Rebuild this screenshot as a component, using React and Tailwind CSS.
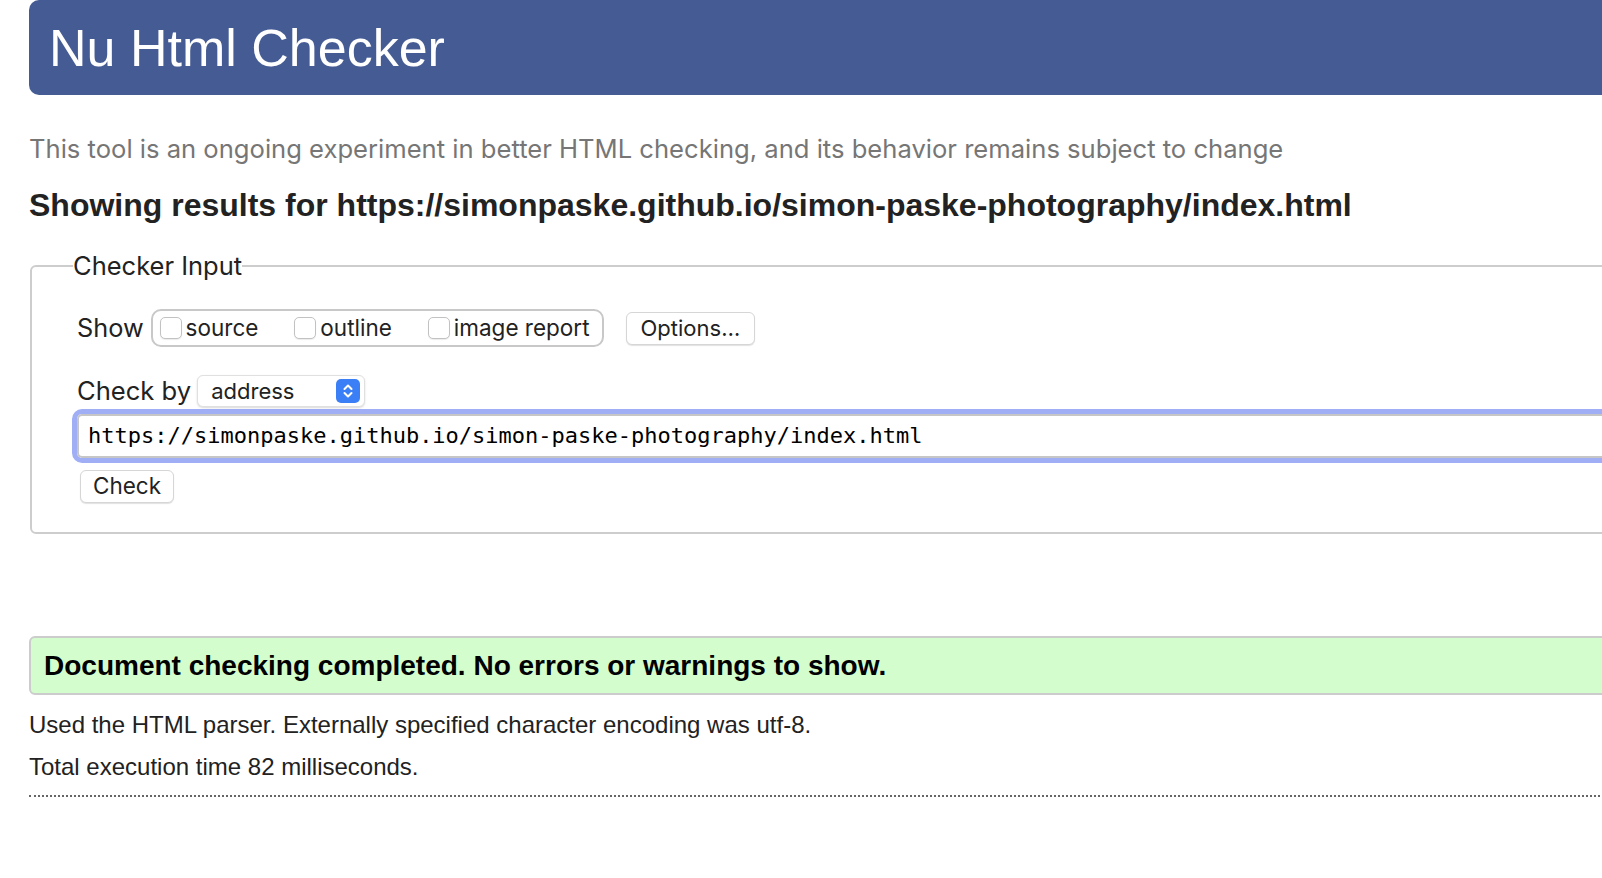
const URL_CHECKED = 'https://simonpaske.github.io/simon-paske-photography/index.html'

const SHOW_OPTIONS = ['source', 'outline', 'image report']

function Checkbox() {
  return (
    <span className="inline-block w-[22px] h-[22px] rounded-[5px] border border-[#c2c2c2] bg-white shadow-[0_1px_1px_rgba(0,0,0,0.08)]" />
  )
}

function SelectArrows() {
  return (
    <span className="flex items-center justify-center w-[24px] h-[24px] rounded-[5px] bg-[#3b7ff6]">
      <svg width="12" height="18" viewBox="0 0 12 18" fill="none" stroke="white" strokeWidth="2" strokeLinecap="round" strokeLinejoin="round">
        <path d="M2.5 7 L6 3.5 L9.5 7" />
        <path d="M2.5 11 L6 14.5 L9.5 11" />
      </svg>
    </span>
  )
}

export default function App() {
  return (
    <div className="w-full min-h-[878px] overflow-hidden bg-white">
      <div className="w-[1720px] pl-[29px]">
        {/* Bandeau titre */}
        <div className="h-[95px] flex items-center pl-[20px] rounded-[10px] bg-[#455b93]">
          <h1 className="font-['Liberation_Sans',Arial,sans-serif] text-[52px] leading-none text-white">Nu Html Checker</h1>
        </div>

        <p className="mt-[42px] font-['Inter',sans-serif] text-[25.6px] leading-[24px] text-[#767676]">
          This tool is an ongoing experiment in better HTML checking, and its behavior remains subject to change
        </p>

        <h2 className="mt-[28px] font-['Liberation_Sans',Arial,sans-serif] font-bold text-[32px] leading-[32px] text-[#222]">
          Showing results for {URL_CHECKED}
        </h2>

        {/* Formulaire */}
        <fieldset className="mt-[33px] ml-[1px] border-2 border-[#cdcdcd] rounded-[6px] font-['Inter',sans-serif] text-[#222]">
          <legend className="ml-[41px] text-[25.5px] leading-[24px]">Checker Input</legend>

          <div className="pt-[31px] pl-[45px] pb-[29px]">
            <div className="flex items-center">
              <span className="text-[25.3px] leading-none">Show</span>
              <div className="ml-[7px] h-[38px] flex items-center pl-[7px] pr-[12px] border-2 border-[#c8c8c8] rounded-[10px]">
                {SHOW_OPTIONS.map((o, i) => (
                  <label key={o} className={`flex items-center ${i > 0 ? 'ml-[36px]' : ''}`}>
                    <Checkbox />
                    <span className="ml-[4px] text-[22.5px] leading-none">{o}</span>
                  </label>
                ))}
              </div>
              <button className="ml-[22px] h-[33px] px-[14px] rounded-[6px] border border-[#d6d6d6] bg-white text-[22px] leading-none shadow-[0_1px_1px_rgba(0,0,0,0.12)]">
                Options…
              </button>
            </div>

            <div className="mt-[28px] flex items-center">
              <span className="text-[25.6px] leading-none">Check by</span>
              <div className="ml-[6px] w-[168px] h-[32px] flex items-center justify-between pl-[13px] pr-[4px] rounded-[6px] border border-[#e0e0e0] bg-white shadow-[0_1px_2px_rgba(0,0,0,0.15)]">
                <span className="text-[22px] leading-none">address</span>
                <SelectArrows />
              </div>
            </div>

            <div className="-ml-[5px] mt-[2px] border-[5px] border-[#a0aef5] rounded-[10px]">
              <div className="h-[44px] flex items-center pl-[9px] border-2 border-[#c6c6c6] rounded-[5px] bg-white">
                <span className="font-['DejaVu_Sans_Mono',monospace] text-[22px] leading-none text-black">{URL_CHECKED}</span>
              </div>
            </div>

            <button className="mt-[7px] ml-[3px] h-[33px] px-[12px] rounded-[6px] border border-[#d6d6d6] bg-white text-[22.5px] leading-none shadow-[0_1px_1px_rgba(0,0,0,0.12)]">
              Check
            </button>
          </div>
        </fieldset>

        {/* Résultat */}
        <div className="mt-[102px] h-[59px] flex items-center pl-[13px] border-2 border-[#cccccc] rounded-[6px] bg-[#d4fdcd]">
          <p className="font-['Liberation_Sans',Arial,sans-serif] font-bold text-[28px] leading-none text-black">
            Document checking completed. No errors or warnings to show.
          </p>
        </div>

        <div className="font-['Liberation_Sans',Arial,sans-serif] text-[24px] leading-[24px] text-[#222]">
          <p className="mt-[18px]">Used the HTML parser. Externally specified character encoding was utf-8.</p>
          <p className="mt-[18px]">Total execution time 82 milliseconds.</p>
        </div>

        <div className="mt-[16px] border-t-2 border-dotted border-[#666]" />
      </div>
    </div>
  )
}
